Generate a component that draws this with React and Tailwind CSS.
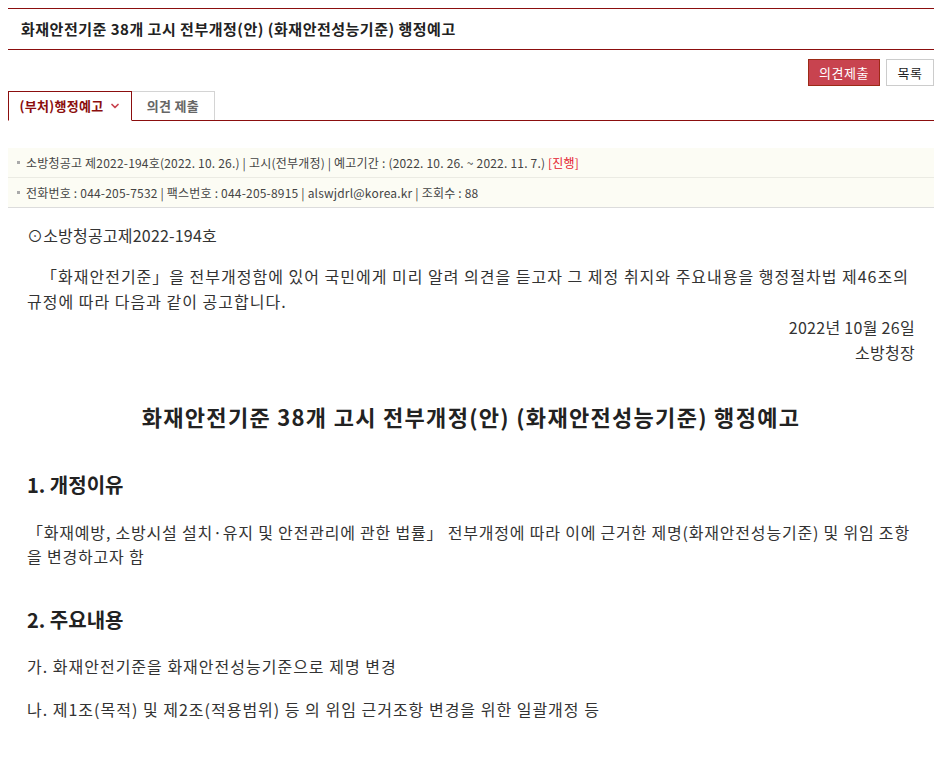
import React from 'react';
import { ChevronDown } from 'lucide-react';

const InfoRow = ({ children, last }) => (
  <div
    className={`flex items-center h-[30px] pl-[9px] text-[12px] text-[#444] ${
      last ? 'border-b border-[#dcdcdc]' : 'border-b border-[#ebebe3]'
    }`}
  >
    <span className="w-[3px] h-[3px] bg-[#aaa] mr-[6px]" />
    <span className="tracking-[0.2px]">{children}</span>
  </div>
);

const App = () => {
  return (
    <div
      className="w-[942px] min-h-[757px] bg-white px-2 pt-2 text-[#333]"
      style={{ fontFamily: '"Noto Sans CJK KR", "Noto Sans", sans-serif' }}
    >
      {/* title */}
      <div className="h-[42px] border-y border-[#8b0e0e] flex items-center pl-[13px]">
        <h1 className="text-[15px] tracking-[0.5px] font-bold text-[#222]">
          화재안전기준 38개 고시 전부개정(안) (화재안전성능기준) 행정예고
        </h1>
      </div>

      {/* buttons */}
      <div className="flex justify-end gap-[6px] mt-[9px]">
        <button className="h-[27px] w-[72px] bg-[#c8434f] border border-[#9c2a16] text-white text-[13px] tracking-[0.5px]">
          의견제출
        </button>
        <button className="h-[27px] w-[48px] bg-white border border-[#cccccc] text-[#222] text-[13px] tracking-[0.5px]">
          목록
        </button>
      </div>

      {/* tabs */}
      <div className="flex mt-[5px] border-b border-[#8b0e0e] h-[30px]">
        <div className="w-[124px] h-[30px] border border-[#8b0e0e] border-b-white bg-white flex items-center justify-center gap-[5px] text-[13px] font-bold text-[#8b0e0e] -mb-px">
          <span className="tracking-[0.3px]">(부처)행정예고</span>
          <ChevronDown size={12} strokeWidth={3.5} className="text-[#c8434f]" />
        </div>
        <div className="w-[83px] h-[29px] border-t border-r border-[#d4d4d4] flex items-center justify-center text-[13px] font-bold text-[#666] tracking-[0.3px]">
          의견 제출
        </div>
      </div>

      {/* info box */}
      <div className="mt-[27px] bg-[#fcfcf4]">
        <InfoRow>
          소방청공고 제2022-194호(2022. 10. 26.) | 고시(전부개정) | 예고기간 : (2022. 10. 26. ~ 2022. 11. 7.){' '}
          <span className="text-[#e4202e]">[진행]</span>
        </InfoRow>
        <InfoRow last>
          전화번호 : 044-205-7532 | 팩스번호 : 044-205-8915 | alswjdrl@korea.kr | 조회수 : 88
        </InfoRow>
      </div>

      {/* body */}
      <div className="px-[19px] pt-[15px] text-[#333]">
        <p className="text-[16px] leading-[24px] tracking-[0.2px]">⊙소방청공고제2022-194호</p>

        <p className="mt-[17px] text-[16px] leading-[25px] indent-[14px] tracking-[1px]">
          「화재안전기준」을 전부개정함에 있어 국민에게 미리 알려 의견을 듣고자 그 제정 취지와 주요내용을 행정절차법 제46조의 규정에 따라 다음과 같이 공고합니다.
        </p>
        <p className="text-right text-[16px] leading-[25px] mt-[1px] tracking-[0.3px]">2022년 10월 26일</p>
        <p className="text-right text-[16px] leading-[25px] tracking-[0.3px]">소방청장</p>

        <h2 className="mt-[35px] text-center text-[22px] font-bold text-[#222] leading-[32px] tracking-[1.3px]">
          화재안전기준 38개 고시 전부개정(안) (화재안전성능기준) 행정예고
        </h2>

        <h3 className="mt-[38px] text-[20px] font-bold text-[#222] leading-[30px]">1. 개정이유</h3>
        <p className="mt-[20px] text-[16px] leading-[24px] tracking-[0.8px]">
          「화재예방, 소방시설 설치·유지 및 안전관리에 관한 법률」 전부개정에 따라 이에 근거한 제명(화재안전성능기준) 및 위임 조항을 변경하고자 함
        </p>

        <h3 className="mt-[37px] text-[20px] font-bold text-[#222] leading-[30px]">2. 주요내용</h3>
        <p className="mt-[19px] text-[16px] leading-[24px] tracking-[1px]">가. 화재안전기준을 화재안전성능기준으로 제명 변경</p>
        <p className="mt-[19px] text-[16px] leading-[24px] tracking-[1px]">
          나. 제1조(목적) 및 제2조(적용범위) 등 의 위임 근거조항 변경을 위한 일괄개정 등
        </p>
      </div>
    </div>
  );
};

export default App;
